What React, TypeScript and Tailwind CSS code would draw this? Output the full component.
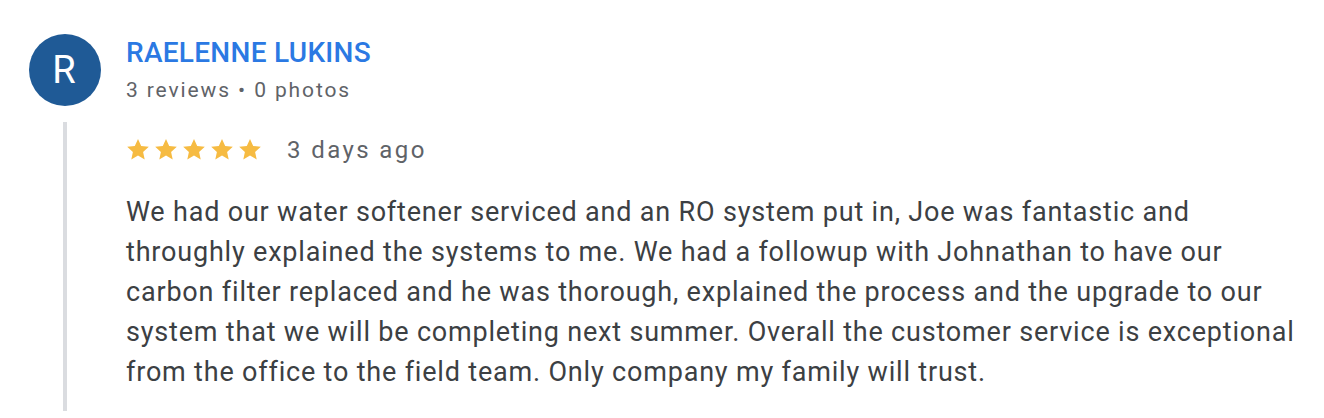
export default function App() {
  return (
    <div className="w-[1324px] h-[418px] bg-white font-['Roboto',sans-serif] overflow-hidden">
      <div className="flex gap-[25px] pl-[29px] pt-[34px]">
        <div className="w-[72px] h-[72px] rounded-full bg-[#1f5a96] flex items-center justify-center text-white text-[38px] leading-none shrink-0 tracking-[0.05em]">
          R
        </div>
        <div className="pt-[1px]">
          <div className="text-[#2b79e3] text-[28px] font-medium leading-[36px] tracking-[0.01em]">
            RAELENNE LUKINS
          </div>
          <div className="text-[#5f6368] text-[21px] leading-[26px] tracking-[0.09em] mt-[6px]">
            3 reviews • 0 photos
          </div>
        </div>
      </div>
      <div className="ml-[63px] mt-[16px] border-l-[4px] border-[#dadce0] pl-[59px] pb-[19px] w-[1240px]">
        <div className="flex items-center gap-[25px] pt-[12px]">
          <div className="flex gap-[4px]">
            {[0, 1, 2, 3, 4].map((i) => (
              <svg key={i} viewBox="0 0 24 24" className="w-[24px] h-[24px]" fill="#f6bb42">
                <path d="M12 1l3.2 7 7.6.8-5.7 5.1 1.6 7.5L12 17.6 5.3 21.4l1.6-7.5L1.2 8.8l7.6-.8z" />
              </svg>
            ))}
          </div>
          <span className="text-[#5f6368] text-[24px] leading-[32px] tracking-[0.1em]">3 days ago</span>
        </div>
        <p className="mt-[26px] text-[#3c4043] text-[27px] leading-[40px] tracking-[0.03em] max-w-[1180px]">
          We had our water softener serviced and an RO system put in, Joe was fantastic and throughly explained the systems to me. We had a followup with Johnathan to have our carbon filter replaced and he was thorough, explained the process and the upgrade to our system that we will be completing next summer. Overall the customer service is exceptional from the office to the field team. Only company my family will trust.
        </p>
      </div>
    </div>
  );
}
